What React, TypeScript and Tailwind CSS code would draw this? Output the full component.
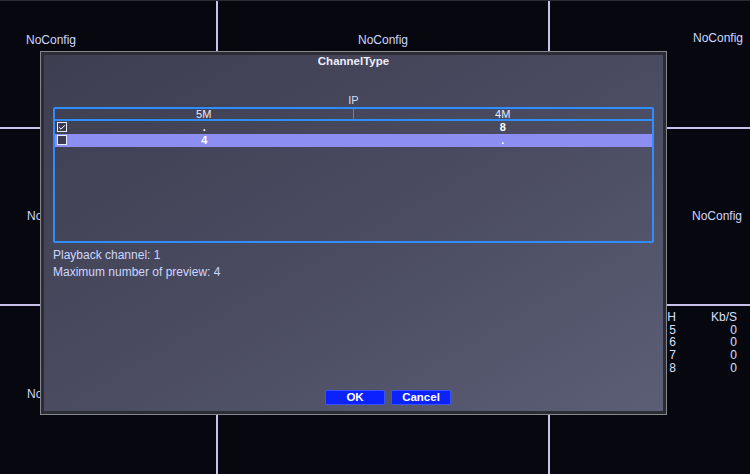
import { Check } from "lucide-react";

const font = { fontFamily: '"Liberation Sans", Arial, sans-serif' };

// 3x3 preview grid behind the dialog
const cells = [
  { cls: "pl-[26px] pt-[33px]", label: "NoConfig" },
  { cls: "justify-center pt-[33px]", label: "NoConfig" },
  { cls: "pl-[143px] pt-[31px]", label: "NoConfig" },
  { cls: "pl-[27px] items-center", label: "NoConfig" },
  { cls: "", label: "" },
  { cls: "pl-[142px] items-center", label: "NoConfig" },
  { cls: "pl-[27px] pt-[82px]", label: "NoConfig" },
  { cls: "", label: "" },
  { cls: "", label: "" },
];

const rates = ["5", "6", "7", "8"];

function Checkbox({ checked }: { checked: boolean }) {
  return (
    <div className="flex h-[10px] w-[10px] items-center justify-center border border-[#e8ecff] bg-[#3b3c50]">
      {checked && <Check className="h-[9px] w-[9px] text-white" strokeWidth={3} />}
    </div>
  );
}

function Row({ checked, a, b, active }: { checked: boolean; a: string; b: string; active?: boolean }) {
  return (
    <div className={`relative grid h-[13px] grid-cols-2 text-[11px] font-bold leading-[13px] text-white ${active ? "bg-[#8c8ef2]" : ""}`}>
      <div className="absolute left-[2px] top-[1px]">
        <Checkbox checked={checked} />
      </div>
      <div className="text-center">{a}</div>
      <div className="text-center">{b}</div>
    </div>
  );
}

export default function App() {
  return (
    <div className="relative h-[474px] w-[750px] overflow-hidden bg-[#07070f]" style={font}>
      <div className="grid h-full grid-cols-[218px_332px_1fr] grid-rows-[128px_177px_1fr] border-t border-[#2a2a34]">
        {cells.map((c, i) => (
          <div
            key={i}
            className={`relative flex text-[12px] leading-[13px] text-[#cfd8ff] ${c.cls} ${i % 3 !== 2 ? "border-r-2 border-[#c9c1ec]" : ""} ${i < 6 ? "border-b-2 border-[#c9c1ec]" : ""}`}
          >
            {c.label}
            {i === 8 && (
              <div className="ml-[100px] mt-[5px] flex w-[87px] justify-between text-[12px] leading-[12.7px] text-[#d8e0ff]">
                <div className="flex w-[26px] flex-col items-end">
                  <span>CH</span>
                  {rates.map((r) => (
                    <span key={r}>{r}</span>
                  ))}
                </div>
                <div className="flex flex-col items-end">
                  <span>Kb/S</span>
                  {rates.map((r) => (
                    <span key={r}>0</span>
                  ))}
                </div>
              </div>
            )}
          </div>
        ))}
      </div>

      {/* ChannelType dialog */}
      <div className="absolute left-[40px] top-[51px] h-[364px] w-[627px] bg-[#85858e] p-px">
        <div className="flex h-full flex-col border-[3px] border-[#2c2c35] bg-gradient-to-br from-[#3d3e50] via-[#4a4b60] to-[#5c5e76] px-[9px]">
          <div className="text-center text-[11.5px] font-bold leading-[12px] text-[#eef0ff]">ChannelType</div>
          <div className="mt-[27px] text-center text-[11px] leading-[13px] text-[#d4dcff]">IP</div>
          <div className="h-[136px] rounded-[2px] border-2 border-[#2f8dff]">
            <div className="grid h-[12px] grid-cols-2 border-b-2 border-[#2f8dff] text-[11px] leading-[11px] text-[#e8ecff]">
              <div className="border-r border-[#2f8dff] text-center">5M</div>
              <div className="text-center">4M</div>
            </div>
            <Row checked a="." b="8" />
            <Row checked={false} a="4" b="." active />
          </div>
          <div className="mt-[4px] text-[12px] leading-[17px] text-[#cdd7ff]">
            <div>Playback channel: 1</div>
            <div>Maximum number of preview: 4</div>
          </div>
          <div className="flex-1" />
          <div className="mb-[6px] ml-[272px] flex gap-[6px]">
            <button className="h-[15px] w-[60px] rounded-[2px] border border-[#3a55ff] bg-[#0b22ff] text-[11.5px] font-bold leading-[13px] text-white">
              OK
            </button>
            <button className="h-[15px] w-[60px] rounded-[2px] border border-[#3a55ff] bg-[#0b22ff] text-[11.5px] font-bold leading-[13px] text-white">
              Cancel
            </button>
          </div>
        </div>
      </div>
    </div>
  );
}
